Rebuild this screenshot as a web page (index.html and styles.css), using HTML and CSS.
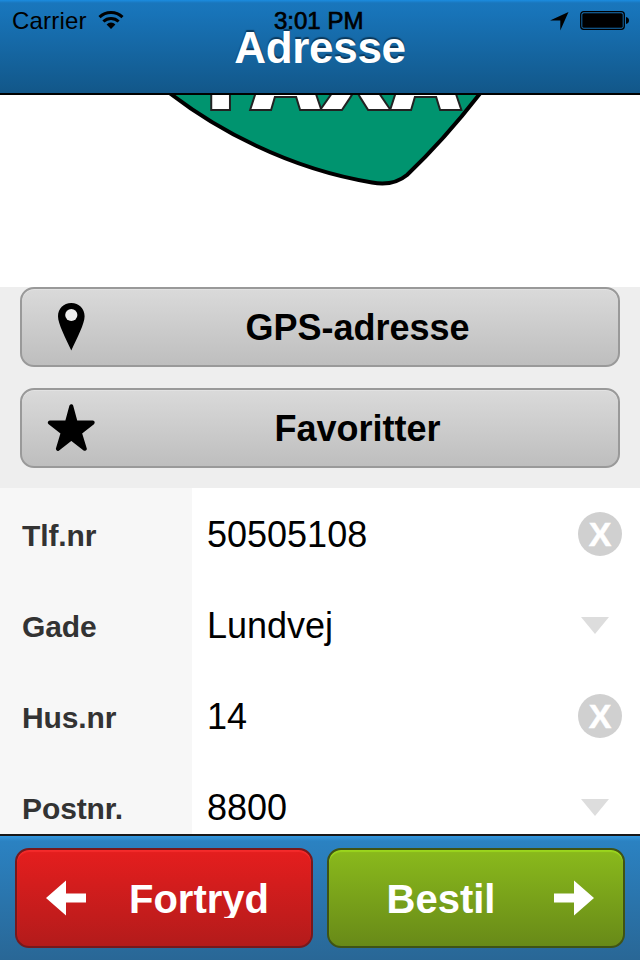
FILE: index.html
```html
<!DOCTYPE html>
<html lang="da">
<head>
  <meta charset="UTF-8" />
  <meta name="viewport" content="width=device-width, initial-scale=1.0"/>
  <title>Adresse</title>
  <link rel="stylesheet" href="styles.css">
</head>
<body>
  <div class="app">
    <header class="header">
      <div class="status-bar">
        <span class="carrier">Carrier</span>
        <svg class="wifi" width="26" height="20" viewBox="0 0 26 20">
          <g fill="none" stroke="#000" stroke-width="3">
            <path d="M1.500 7.200a16.500 16.500 0 0 1 23 0"/>
            <path d="M5.400 11.500a11 11 0 0 1 15.200 0"/>
          </g>
          <path d="M8.600 14.400a6.300 6.300 0 0 1 8.800 0L13 19z"/>
        </svg>
        <span class="clock">3:01 PM</span>
        <svg class="status-icons" width="80" height="20" viewBox="0 0 80 20">
          <path d="M0 9.500L18.500 1L10.300 19.500V9.500z"/>
          <rect x="30.700" y=".7" width="43.600" height="17.600" rx="3" fill="none" stroke="#000" stroke-width="1.300"/>
          <rect x="32.300" y="2.300" width="40.400" height="14.400" rx="1.500"/>
          <path d="M76 6c4 .4 4 6.600 0 7z"/>
        </svg>
      </div>
      <h1>Adresse</h1>
    </header>

    <main class="content">
      <div class="logo">
        <svg width="330" height="192" viewBox="160 95 330 192">
          <path d="M162 87C215 130 290 169 372 182.500Q393 186.500 407 175Q447 137 485 87z" fill="#00946f" stroke="#000" stroke-width="4"/>
          <text class="logo-text" x="188 248 318 388" y="110">TAXA</text>
        </svg>
      </div>

      <div class="actions">
        <button class="action-btn" type="button">
          <svg width="48" height="48" viewBox="0 0 48 48">
            <path d="M24.300 0C32 0 37.600 5.600 37.600 13.300C37.600 21 30 35 24.300 47.500C18.600 35 11 21 11 13.300C11 5.600 16.600 0 24.300 0z"/>
            <circle cx="24.300" cy="12" r="6.100" fill="#eee"/>
          </svg>
          <span>GPS-adresse</span>
        </button>
        <button class="action-btn" type="button">
          <svg width="48" height="48" viewBox="0 0 48 48">
            <path d="M24.300 2.200L28.700 18.600H45.700L32.900 28.800L37.800 44.800L24.300 34.500L10.900 44.800L15.700 28.800L2.900 18.600H19.900z" stroke="#000" stroke-width="4" stroke-linejoin="round"/>
          </svg>
          <span>Favoritter</span>
        </button>
      </div>

      <div class="form">
        <div class="row">
          <label>Tlf.nr</label>
          <div class="field"><span>50505108</span><i class="clear">X</i></div>
        </div>
        <div class="row">
          <label>Gade</label>
          <div class="field"><span>Lundvej</span><i class="arrow"></i></div>
        </div>
        <div class="row">
          <label>Hus.nr</label>
          <div class="field"><span>14</span><i class="clear">X</i></div>
        </div>
        <div class="row">
          <label>Postnr.</label>
          <div class="field"><span>8800</span><i class="arrow"></i></div>
        </div>
      </div>
    </main>

    <footer class="footer">
      <button class="btn cancel" type="button">
        <svg width="41" height="36" viewBox="0 0 41 36">
          <path d="M0 18L20 .5V13.500H40V22.500H20V35.500z"/>
        </svg>
        <span>Fortryd</span>
      </button>
      <button class="btn order" type="button">
        <span>Bestil</span>
        <svg width="41" height="36" viewBox="0 0 41 36">
          <path d="M41 18L21 .5V13.500H1V22.500H21V35.500z"/>
        </svg>
      </button>
    </footer>
  </div>
</body>
</html>
```

FILE: styles.css
```css
* {
  margin: 0;
  padding: 0;
  box-sizing: border-box;
}

body {
  font-family: "Liberation Sans", Arial, sans-serif;
  background: #fff;
}

.app {
  display: flex;
  flex-direction: column;
  width: 640px;
  height: 960px;
  overflow: hidden;
}

/* header */
.header {
  position: relative;
  flex: none;
  height: 95px;
  padding-top: 23px;
  border-bottom: 2px solid #000;
  background: linear-gradient(#1b8ce0 0, #1976bc 3px, #1874b9 12px, #125789 100%);
}

.header h1 {
  color: #fff;
  font-size: 44px;
  line-height: 50px;
  letter-spacing: -0.3px;
  text-align: center;
  text-shadow: 0 -2px 1px #0b3a5e;
}

.status-bar {
  position: absolute;
  top: 0;
  left: 0;
  width: 100%;
  height: 42px;
  padding: 0 12px;
  display: flex;
  align-items: center;
  font-size: 24px;
}

.carrier {
  width: 86px;
  letter-spacing: 0.2px;
}

.wifi {
  margin-top: -2px;
}

.clock {
  margin-left: 150px;
  -webkit-text-stroke: 0.7px #000;
}

.status-icons {
  margin-left: auto;
  margin-right: -2px;
}

/* scrolled content */
.content {
  flex: 1;
  min-height: 0;
  overflow: hidden;
}

.logo {
  height: 192px;
  padding-left: 160px;
}

.logo svg {
  display: block;
}

.logo-text {
  font-family: Inter, "DejaVu Sans", sans-serif;
  font-weight: 900;
  font-size: 95px;
  fill: #fff;
  stroke: #222;
  stroke-width: 2px;
}

.actions {
  display: flex;
  flex-direction: column;
  gap: 21px;
  height: 201px;
  padding: 0 20px 20px;
  background: #eee;
}

.action-btn {
  flex: 1;
  display: flex;
  align-items: center;
  padding-left: 25px;
  border: 2px solid #999;
  border-radius: 14px;
  background: linear-gradient(#dadada, #bebebe);
  box-shadow: inset 0 1px 0 #e2e2e2;
  font-family: inherit;
  font-size: 36px;
  font-weight: bold;
  color: #000;
}

.action-btn span {
  flex: 1;
  padding: 1px 0 0 2px;
  text-align: center;
}

.row {
  display: flex;
  height: 91px;
}

.row label {
  width: 192px;
  padding-left: 22px;
  background: #f7f7f7;
  color: #333;
  font-size: 30px;
  font-weight: bold;
  letter-spacing: -0.1px;
  line-height: 96px;
}

.field {
  flex: 1;
  display: flex;
  align-items: center;
  justify-content: space-between;
  padding: 1px 18px 0 15px;
  font-size: 36px;
}

.field span {
  padding-top: 2px;
}

.clear {
  width: 44px;
  height: 44px;
  border-radius: 50%;
  background: #d0d0d0;
  color: #fff;
  font-size: 34px;
  font-style: normal;
  font-weight: bold;
  line-height: 44px;
  text-align: center;
  -webkit-text-stroke: 0.5px #fff;
}

.arrow {
  margin-right: 13px;
  border: 14px solid transparent;
  border-top: 17px solid #ddd;
  border-bottom: 0;
}

/* bottom bar */
.footer {
  flex: none;
  display: flex;
  gap: 14px;
  height: 126px;
  padding: 12px 15px;
  border-top: 2px solid #181818;
  background: linear-gradient(#3498df 0, #2b82c2 5px, #296796 100%);
}

.btn {
  flex: 1;
  display: flex;
  align-items: center;
  border: 2px solid;
  border-radius: 14px;
  font-family: inherit;
  font-size: 40px;
  font-weight: bold;
  color: #fff;
}

.btn span {
  flex: 1;
  height: 40px;
  line-height: 42px;
  overflow: hidden;
  text-align: center;
}

.btn svg {
  fill: #fff;
}

.cancel {
  padding-left: 29px;
  border-color: #76191d;
  background: linear-gradient(#e51e1e, #b31b1b);
  box-shadow: inset 0 2px 1px #f32b2b;
}

.order {
  padding-right: 29px;
  border-color: #3f5315;
  background: linear-gradient(#8aba1c, #688a18);
  box-shadow: inset 0 2px 1px #9bd51d;
}
```
